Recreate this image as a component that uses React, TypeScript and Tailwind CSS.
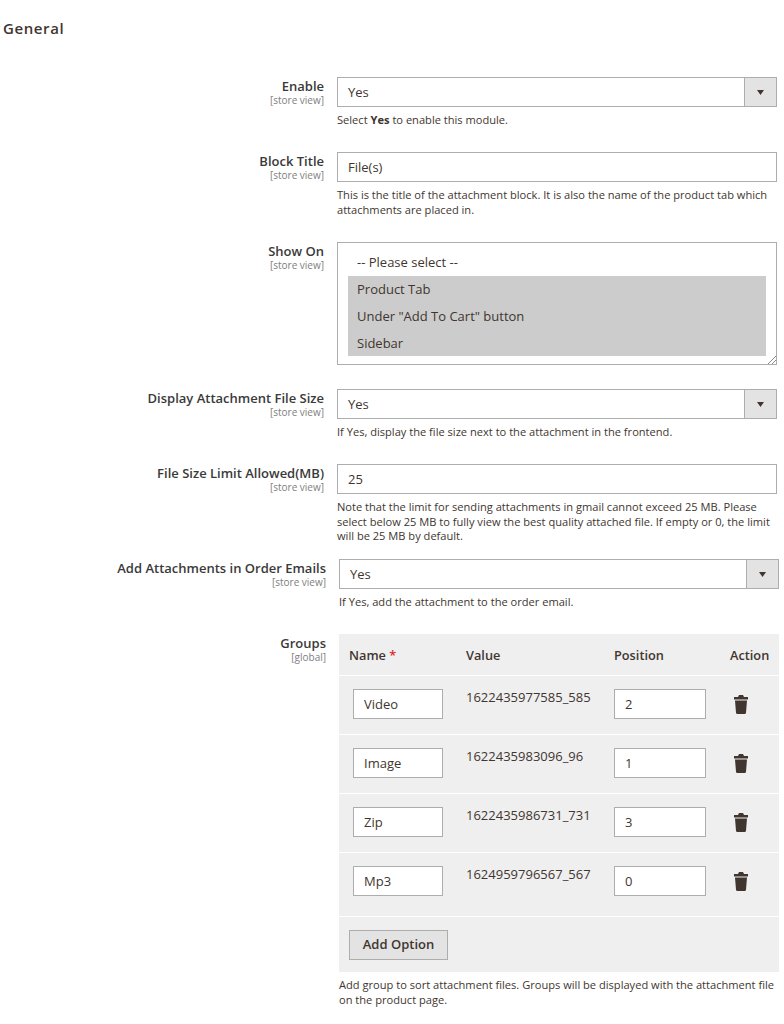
import React from "react";

const Arrow = () => (
  <div className="w-8 flex items-center justify-center bg-[#e3e3e3] border-l border-[#adadad]">
    <svg width="7" height="5" viewBox="0 0 7 5">
      <path d="M0 0h7L3.5 5z" fill="#41362f" />
    </svg>
  </div>
);

const Trash = () => (
  <svg width="14" height="19" viewBox="0 0 14 19" fill="#41362f">
    <path d="M5 0h4l1 2h4v2.5H0V2h4z" />
    <path d="M1 5.5h12l-1 12.2q-.1 1.3-1.4 1.3H3.4q-1.3 0-1.4-1.3z" />
  </svg>
);

interface RowProps {
  label: string;
  scope?: string;
  className?: string;
  children: React.ReactNode;
}

const Row = ({ label, scope = "[store view]", className = "", children }: RowProps) => (
  <div className={"flex " + className}>
    <div className="w-[324px] shrink-0 text-right pt-[1px]">
      <div className="text-[13px] leading-[17px] font-semibold text-[#3a3a3a]">{label}</div>
      <div className="-mt-[1px] text-[10px] leading-[12px] text-[#808080]">{scope}</div>
    </div>
    <div className="w-[440px] ml-[13px] shrink-0">{children}</div>
  </div>
);

const Select = () => (
  <div className="flex h-[30px] bg-white border border-[#adadad] text-[13px] text-[#41362f]">
    <div className="flex-1 pl-[10px] leading-[28px]">Yes</div>
    <Arrow />
  </div>
);

const Input = ({ value }: { value: string }) => (
  <div className="h-[30px] bg-white border border-[#adadad] text-[13px] leading-[28px] pl-[10px] text-[#41362f]">
    {value}
  </div>
);

const Note = ({ children }: { children: React.ReactNode }) => (
  <p className="mt-[6px] text-[11.1px] leading-[14.5px] text-[#41362f]">{children}</p>
);

const groups = [
  { name: "Video", value: "1622435977585_585", pos: "2" },
  { name: "Image", value: "1622435983096_96", pos: "1" },
  { name: "Zip", value: "1622435986731_731", pos: "3" },
  { name: "Mp3", value: "1624959796567_567", pos: "0" },
];

const GroupRow = ({ name, value, pos, last }: { name: string; value: string; pos: string; last: boolean }) => (
  <div
    className={
      "grid grid-cols-[117px_148px_116px_59px] border-t border-white pt-[13px] " + (last ? "h-[64px]" : "h-[59px]")
    }
  >
    <div className="pl-[14px]">
      <div className="w-[90px]">
        <Input value={name} />
      </div>
    </div>
    <div className="pl-[10px] text-[13px] leading-[16px] text-[#41362f]">{value}</div>
    <div className="pl-[10px]">
      <div className="w-[92px]">
        <Input value={pos} />
      </div>
    </div>
    <div className="pl-[14px] pt-[6px]">
      <Trash />
    </div>
  </div>
);

export default function App() {
  return (
    <div className="h-[1024px] overflow-hidden bg-white pl-[3px] font-['Open_Sans',sans-serif]">
      <h2 className="pt-[19px] text-[15px] leading-[19px] font-semibold tracking-[0.6px] text-[#41362f]">General</h2>

      <div className="-ml-[3px]">
        <Row label="Enable" className="mt-[39px]">
          <Select />
          <Note>
            Select <b className="font-bold">Yes</b> to enable this module.
          </Note>
        </Row>

        <Row label="Block Title" className="mt-[24.5px]">
          <Input value="File(s)" />
          <Note>
            This is the title of the attachment block. It is also the name of the product tab which attachments are
            placed in.
          </Note>
        </Row>

        <Row label="Show On" className="mt-[25px]">
          <div className="relative h-[123px] bg-white border border-[#adadad] px-[10px] pt-[6px] text-[13px] text-[#41362f]">
            <div className="h-[27px] leading-[27px] pl-[9px]">-- Please select --</div>
            <div className="h-[27px] leading-[27px] pl-[9px] bg-[#cccccc]">Product Tab</div>
            <div className="h-[27px] leading-[27px] pl-[9px] bg-[#cccccc]">Under "Add To Cart" button</div>
            <div className="h-[26px] leading-[27px] pl-[9px] bg-[#cccccc]">Sidebar</div>
            <svg className="absolute right-0 bottom-0" width="9" height="9" viewBox="0 0 9 9" stroke="#8a8a8a">
              <path d="M1 9l8-8M5 9l4-4" />
            </svg>
          </div>
        </Row>

        <Row label="Display Attachment File Size" className="mt-[24px]">
          <Select />
          <Note>If Yes, display the file size next to the attachment in the frontend.</Note>
        </Row>

        <Row label="File Size Limit Allowed(MB)" className="mt-[24.5px]">
          <Input value="25" />
          <Note>
            Note that the limit for sending attachments in gmail cannot exceed 25 MB. Please select below 25 MB to fully
            view the best quality attached file. If empty or 0, the limit will be 25 MB by default.
          </Note>
        </Row>

        <div className="pl-[2px]">
          <Row label="Add Attachments in Order Emails" className="mt-[15.5px]">
            <Select />
            <Note>If Yes, add the attachment to the order email.</Note>
          </Row>

          <Row label="Groups" scope="[global]" className="mt-[24.5px]">
            <div className="bg-[#efefef]">
              <div className="grid grid-cols-[117px_148px_116px_59px] h-[41px] pt-[2px] items-center text-[12.75px] font-semibold text-[#41362f]">
                <div className="pl-[10px]">
                  Name <span className="text-[#e22626]">*</span>
                </div>
                <div className="pl-[10px]">Value</div>
                <div className="pl-[10px]">Position</div>
                <div className="pl-[10px]">Action</div>
              </div>
              {groups.map((g, i) => (
                <GroupRow key={g.name} {...g} last={i === groups.length - 1} />
              ))}
              <div className="border-t border-white h-[56px] pt-[13px] pl-[10px]">
                <button className="w-[99px] h-[30px] bg-[#e3e3e3] border border-[#adadad] text-[13px] font-semibold text-[#41362f]">
                  Add Option
                </button>
              </div>
            </div>
            <Note>
              Add group to sort attachment files. Groups will be displayed with the attachment file on the product page.
            </Note>
          </Row>
        </div>
      </div>
    </div>
  );
}
